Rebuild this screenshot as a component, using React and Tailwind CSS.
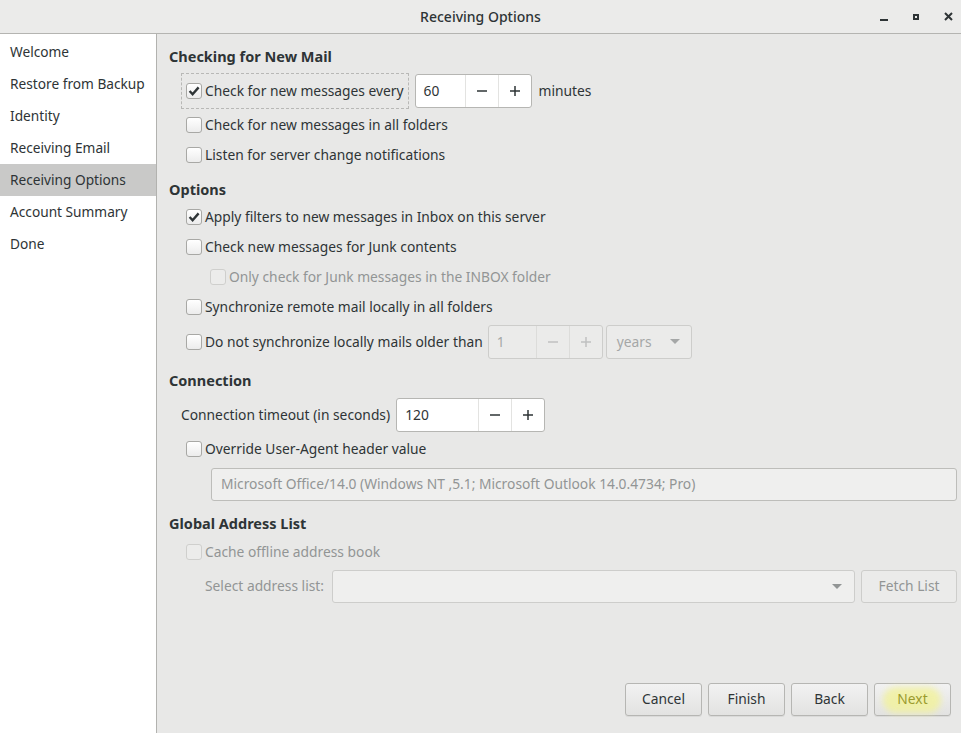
import React from 'react';

const font = { fontFamily: '"Noto Sans", "DejaVu Sans", sans-serif' };

const navItems = [
  'Welcome',
  'Restore from Backup',
  'Identity',
  'Receiving Email',
  'Receiving Options',
  'Account Summary',
  'Done',
];

const CheckBox = ({ checked, disabled }) => (
  <span
    className={`flex h-4 w-4 shrink-0 items-center justify-center rounded-[3px] border ${
      disabled
        ? 'border-[#cfcfcd] bg-[#ececeb]'
        : 'border-[#a8a8a5] bg-gradient-to-b from-white to-[#ececec]'
    }`}
  >
    {checked && (
      <svg width="12" height="12" viewBox="0 0 12 12">
        <path d="M1.6 6 L4.6 9.2 L10.6 2.4" fill="none" stroke="#2e3436" strokeWidth="2.4" />
      </svg>
    )}
  </span>
);

const Check = ({ label, checked, disabled, className = '' }) => (
  <div className={`flex items-center gap-[3px] ${className}`}>
    <CheckBox checked={checked} disabled={disabled} />
    <span className={disabled ? 'text-[#929595]' : 'text-[#2e3436]'}>{label}</span>
  </div>
);

const SpinButton = ({ value, entryWidth, disabled }) => (
  <div
    className={`flex h-[34px] overflow-hidden rounded-[3px] border ${
      disabled ? 'border-[#cdcdcb] bg-[#ebebea]' : 'border-[#b6b6b3] bg-white'
    }`}
  >
    <div className={`flex items-center pl-2 ${disabled ? 'text-[#a5a7a7]' : 'text-[#2e3436]'}`} style={{ width: entryWidth }}>
      {value}
    </div>
    <div className={`flex w-[33px] items-center justify-center border-l ${disabled ? 'border-[#dcdcda] text-[#c0c1c1]' : 'border-[#e3e3e1] text-[#2e3436]'}`}>
      <svg width="12" height="12" viewBox="0 0 12 12"><path d="M1 6 H11" stroke="currentColor" strokeWidth="1.5" /></svg>
    </div>
    <div className={`flex w-[33px] items-center justify-center border-l ${disabled ? 'border-[#dcdcda] text-[#c0c1c1]' : 'border-[#e3e3e1] text-[#2e3436]'}`}>
      <svg width="12" height="12" viewBox="0 0 12 12"><path d="M1 6 H11 M6 1 V11" stroke="currentColor" strokeWidth="1.5" /></svg>
    </div>
  </div>
);

const Arrow = ({ color }) => (
  <svg width="10" height="6" viewBox="0 0 10 6"><path d="M0 0 H10 L5 5 Z" fill={color} /></svg>
);

const Heading = ({ children, className = '' }) => (
  <div className={`pl-3 text-[14.5px] font-bold text-[#2e3436] ${className}`}>{children}</div>
);

const WizardButton = ({ children, highlight }) => (
  <button
    className={`relative flex h-[33px] w-[77px] items-center justify-center rounded-[3px] border border-[#b6b6b3] bg-gradient-to-b from-[#f2f2f2] to-[#e2e2e1] shadow-[0_1px_0_rgba(0,0,0,0.06)] ${
      highlight ? 'text-[#9b9b2e]' : 'text-[#2e3436]'
    }`}
  >
    {highlight && (
      <span className="absolute left-[8px] top-[3px] h-[26px] w-[58px] rounded-full bg-[#f2f29a] opacity-80 blur-[3px]" />
    )}
    <span className="relative">{children}</span>
  </button>
);

export default function App() {
  return (
    <div className="flex h-[733px] w-[961px] flex-col overflow-hidden bg-[#e8e8e7] text-[13.8px]" style={font}>
      {/* title bar */}
      <div className="relative flex h-[34px] shrink-0 items-center justify-center border-b border-[#b4b4b1] bg-[#ebebea]">
        <span className="text-[14px] font-medium text-[#2e3436]">Receiving Options</span>
        <div className="absolute right-0 top-0 flex h-full translate-x-[3px] items-center">
          <div className="flex w-8 justify-center pt-[6px]">
            <span className="h-[2px] w-[8px] bg-[#2e3436]" />
          </div>
          <div className="flex w-8 justify-center">
            <span className="h-[6px] w-[6px] border-2 border-[#2e3436]" />
          </div>
          <div className="flex w-8 justify-center">
            <svg width="9" height="9" viewBox="0 0 9 9"><path d="M1 1 L8 8 M8 1 L1 8" stroke="#2e3436" strokeWidth="2" /></svg>
          </div>
        </div>
      </div>

      <div className="flex min-h-0 flex-1">
        {/* step list */}
        <div className="w-[157px] shrink-0 border-r border-[#b2b2af] bg-white pt-[2px] text-[13.7px]">
          {navItems.map((item) => (
            <div
              key={item}
              className={`flex h-8 items-center pl-[10px] ${
                item === 'Receiving Options' ? 'bg-[#c9c9c8] text-[#2e3436]' : 'text-[#2e3436]'
              }`}
            >
              {item}
            </div>
          ))}
        </div>

        {/* page */}
        <div className="flex flex-1 flex-col pr-[4px]">
          <Heading className="mt-[11px] leading-[22px]">Checking for New Mail</Heading>

          <div className="mt-[6px] flex items-center pl-6">
            <div className="flex h-[36px] items-center border border-dashed border-[#b8b8b6] pl-[4px] pr-[4px]">
              <Check label="Check for new messages every" checked />
            </div>
            <div className="ml-[6px]">
              <SpinButton value="60" entryWidth={49} />
            </div>
            <span className="ml-[7px] text-[#2e3436]">minutes</span>
          </div>

          <Check label="Check for new messages in all folders" className="mt-[4px] h-[24px] pl-[29px]" />
          <Check label="Listen for server change notifications" className="mt-[6px] h-[24px] pl-[29px]" />

          <Heading className="mt-[11px] leading-[22px]">Options</Heading>
          <Check label="Apply filters to new messages in Inbox on this server" checked className="mt-[5px] h-[24px] pl-[29px]" />
          <Check label="Check new messages for Junk contents" className="mt-[6px] h-[24px] pl-[29px]" />
          <Check label="Only check for Junk messages in the INBOX folder" disabled className="mt-[6px] h-[24px] pl-[53px]" />
          <Check label="Synchronize remote mail locally in all folders" className="mt-[6px] h-[24px] pl-[29px]" />

          <div className="mt-[6px] flex items-center pl-[29px]">
            <Check label="Do not synchronize locally mails older than" />
            <div className="ml-[5px]">
              <SpinButton value="1" entryWidth={47} disabled />
            </div>
            <div className="ml-[3px] flex h-[34px] w-[86px] items-center justify-between rounded-[3px] border border-[#cdcdcb] bg-[#ebebea] pl-[10px] pr-[11px] text-[#a5a7a7]">
              <span>years</span>
              <Arrow color="#a5a7a7" />
            </div>
          </div>

          <Heading className="mt-[10px] leading-[22px]">Connection</Heading>
          <div className="mt-[7px] flex items-center pl-6">
            <span className="text-[#2e3436]">Connection timeout (in seconds)</span>
            <div className="ml-[6px]">
              <SpinButton value="120" entryWidth={81} />
            </div>
          </div>
          <Check label="Override User-Agent header value" className="mt-[5px] h-[24px] pl-[29px]" />
          <div className="ml-[54px] mt-[7px] flex h-[33px] items-center rounded-[3px] border border-[#bdbdba] bg-[#efefee] pl-[9px] text-[#929595]">
            Microsoft Office/14.0 (Windows NT ,5.1; Microsoft Outlook 14.0.4734; Pro)
          </div>

          <Heading className="mt-[11px] leading-[22px]">Global Address List</Heading>
          <Check label="Cache offline address book" disabled className="mt-[6px] h-[24px] pl-[29px]" />
          <div className="mt-[6px] flex items-center pl-[48px]">
            <span className="text-[#929595]">Select address list:</span>
            <div className="ml-[8px] flex h-[33px] flex-1 items-center justify-end rounded-[3px] border border-[#cdcdcb] bg-[#efefee] pr-[12px]">
              <Arrow color="#929595" />
            </div>
            <div className="ml-[6px] flex h-[33px] w-[96px] items-center justify-center rounded-[3px] border border-[#cdcdcb] bg-[#ebebea] text-[#929595]">
              Fetch List
            </div>
          </div>

          <div className="mt-auto mb-[17px] flex justify-end gap-[6px] pr-[6px]">
            <WizardButton>Cancel</WizardButton>
            <WizardButton>Finish</WizardButton>
            <WizardButton>Back</WizardButton>
            <WizardButton highlight>Next</WizardButton>
          </div>
        </div>
      </div>
    </div>
  );
}
